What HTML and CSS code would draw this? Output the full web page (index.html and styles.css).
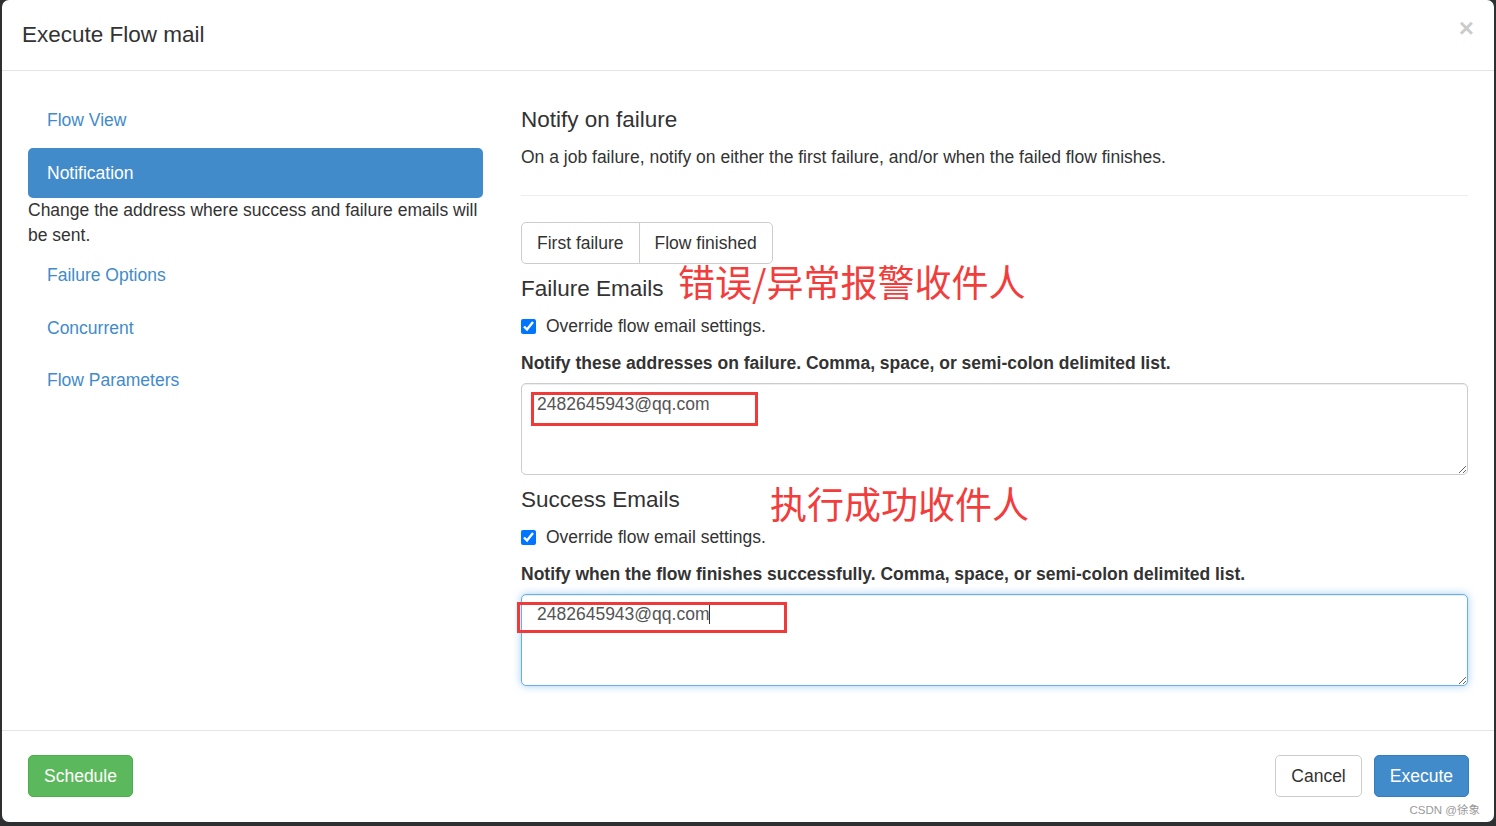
FILE: index.html
```html
<!DOCTYPE html>
<html lang="zh-CN">
<head>
<meta charset="utf-8">
<title>Execute Flow mail</title>
<link rel="stylesheet" href="styles.css">
</head>
<body>

  <div class="modal">
    <div class="modal-header">
      <button class="close">&times;</button>
      <h4 class="modal-title">Execute Flow mail</h4>
    </div>

    <div class="modal-body">
      <div class="side">
        <ul class="pills">
          <li><a href="#">Flow View</a></li>
          <li class="active">
            <a href="#">Notification</a>
            <div class="pill-desc">Change the address where success and failure emails will be sent.</div>
          </li>
          <li><a href="#">Failure Options</a></li>
          <li><a href="#">Concurrent</a></li>
          <li><a href="#">Flow Parameters</a></li>
        </ul>
      </div>

      <div class="main">
        <h4>Notify on failure</h4>
        <p>On a job failure, notify on either the first failure, and/or when the failed flow finishes.</p>
        <hr>

        <div class="btn-group">
          <button class="btn">First failure</button>
          <button class="btn">Flow finished</button>
        </div>

        <h4 class="email-head">Failure Emails<span class="note note-fail">错误/异常报警收件人</span></h4>
        <div class="check">
          <input type="checkbox" checked>
          <span>Override flow email settings.</span>
        </div>
        <div class="label">Notify these addresses on failure. Comma, space, or semi-colon delimited list.</div>
        <div class="field">
          <textarea rows="3">2482645943@qq.com</textarea>
          <div class="mark mark-fail"></div>
        </div>

        <h4 class="email-head">Success Emails<span class="note note-ok">执行成功收件人</span></h4>
        <div class="check">
          <input type="checkbox" checked>
          <span>Override flow email settings.</span>
        </div>
        <div class="label">Notify when the flow finishes successfully. Comma, space, or semi-colon delimited list.</div>
        <div class="field">
          <textarea rows="3" class="focused">2482645943@qq.com</textarea>
          <div class="caret"></div>
          <div class="mark mark-ok"></div>
        </div>
      </div>
    </div>

    <div class="modal-footer">
      <button class="btn btn-success">Schedule</button>
      <div class="footer-right">
        <button class="btn">Cancel</button>
        <button class="btn btn-primary">Execute</button>
      </div>
    </div>

    <div class="watermark">CSDN @徐象</div>
  </div>

</body>
</html>
```

FILE: styles.css
```css
* {
  margin: 0;
  padding: 0;
  box-sizing: border-box;
}

body {
  height: 100vh;
  background: #2e2f31;
  font-family: "Liberation Sans", Arial, sans-serif;
  font-size: 17.5px;
  line-height: 25px;
  color: #333333;
  overflow: hidden;
}

.modal {
  position: relative;
  width: 1492px;
  height: 822px;
  margin-left: 2px;
  background: #ffffff;
  border-radius: 7px;
  display: flex;
  flex-direction: column;
}

.modal-header {
  padding: 18.75px 20px;
  border-bottom: 1px solid #e5e5e5;
}

.modal-title {
  font-size: 22.5px;
  line-height: 32px;
  font-weight: normal;
}

.close {
  float: right;
  margin-top: -7px;
  border: none;
  background: none;
  font-family: "Liberation Sans", Arial, sans-serif;
  font-size: 26px;
  font-weight: bold;
  line-height: 32px;
  color: #000000;
  opacity: 0.2;
}

.modal-body {
  flex: 1;
  display: grid;
  grid-template-columns: 455px 1fr;
  column-gap: 38px;
  align-items: start;
  padding: 25px 26px 24px;
}

/* left nav */
.pills {
  list-style: none;
}

.pills li + li {
  margin-top: 2.5px;
}

.pills a {
  display: block;
  padding: 12.5px 19px;
  color: #428bca;
  text-decoration: none;
  border-radius: 5px;
}

.pills .active a {
  background: #428bca;
  color: #ffffff;
}

.pill-desc {
  color: #333333;
}

/* right side */
.main h4 {
  font-size: 22.5px;
  line-height: 24.75px;
  font-weight: normal;
  margin: 12.5px 0;
}

.main p {
  margin: 0;
}

.main hr {
  border: none;
  border-top: 1px solid #eeeeee;
  margin: 25px 0 26px;
}

.btn-group {
  display: flex;
}

.btn {
  padding: 7.5px 15px;
  font-family: "Liberation Sans", Arial, sans-serif;
  font-size: 17.5px;
  line-height: 25px;
  color: #333333;
  background: #ffffff;
  border: 1px solid #cccccc;
  border-radius: 5px;
}

.btn-group .btn:first-child {
  border-radius: 5px 0 0 5px;
}

.btn-group .btn + .btn {
  margin-left: -1px;
  border-radius: 0 5px 5px 0;
}

.email-head {
  position: relative;
}

.note {
  position: absolute;
  font-family: "Noto Sans CJK SC", sans-serif;
  font-size: 37px;
  line-height: 37px;
  color: #f23d3d;
  white-space: nowrap;
}

.note-fail {
  left: 157px;
  top: -14px;
}

.note-ok {
  left: 249px;
  top: -3px;
}

.check {
  display: flex;
  align-items: center;
  gap: 10px;
  margin-bottom: 12px;
}

.check input {
  width: 15px;
  height: 15px;
  margin: 0;
}

.label {
  font-weight: bold;
  margin-bottom: 7px;
}

.field {
  position: relative;
}

.field textarea {
  display: block;
  width: 100%;
  height: 92px;
  padding: 7.5px 15px;
  font-family: "Liberation Sans", Arial, sans-serif;
  font-size: 17.5px;
  line-height: 25px;
  color: #555555;
  border: 1px solid #cccccc;
  border-radius: 5px;
  box-shadow: inset 0 1px 1px rgba(0, 0, 0, 0.075);
  resize: vertical;
  outline: none;
}

.field textarea.focused {
  border-color: #66afe9;
  box-shadow: inset 0 1px 1px rgba(0, 0, 0, 0.075), 0 0 8px rgba(102, 175, 233, 0.6);
}

.caret {
  position: absolute;
  left: 188px;
  top: 11px;
  width: 1px;
  height: 19px;
  background: #333333;
}

.mark {
  position: absolute;
  border: 3px solid #f03a3a;
}

.mark-fail {
  left: 10px;
  top: 9px;
  width: 227px;
  height: 34px;
}

.mark-ok {
  left: -4px;
  top: 8px;
  width: 270px;
  height: 31px;
}

/* footer */
.modal-footer {
  display: flex;
  justify-content: space-between;
  padding: 24px 25px 25px 26px;
  border-top: 1px solid #e5e5e5;
}

.footer-right {
  display: flex;
  gap: 12px;
}

.btn-success {
  color: #ffffff;
  background: #5cb85c;
  border-color: #4cae4c;
}

.btn-primary {
  color: #ffffff;
  background: #428bca;
  border-color: #357ebd;
}

.watermark {
  position: absolute;
  right: 14px;
  bottom: 4px;
  font-family: "Liberation Sans", "Noto Sans CJK SC", sans-serif;
  font-size: 11.5px;
  line-height: 16px;
  color: #9a9a9a;
}
```
